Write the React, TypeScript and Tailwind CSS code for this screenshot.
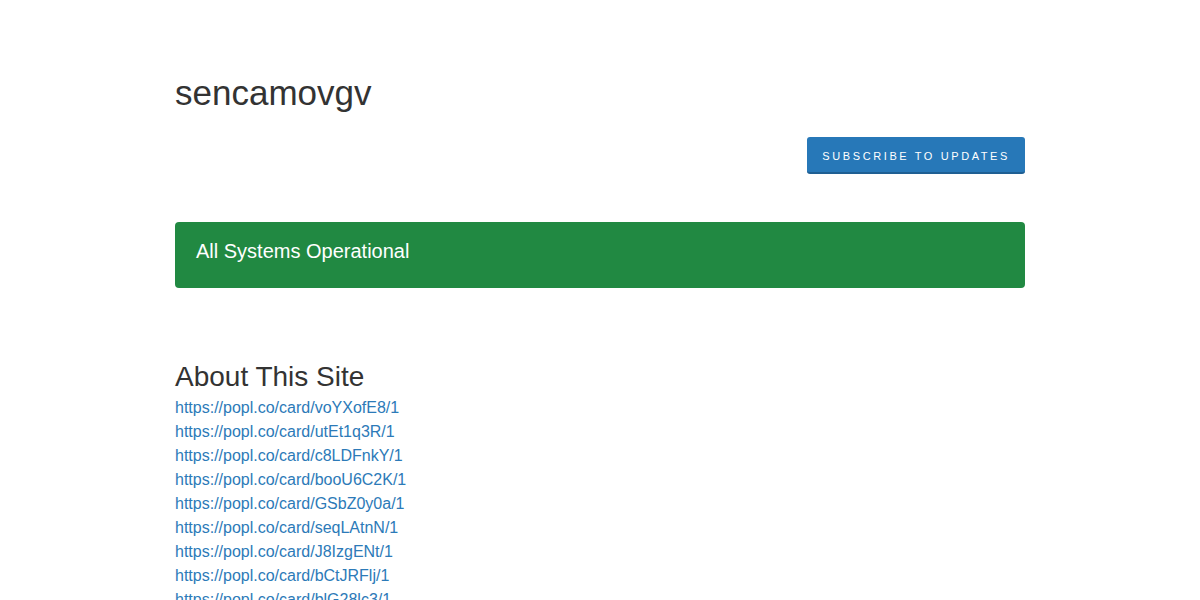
import React from "react";

const links = [
  "voYXofE8",
  "utEt1q3R",
  "c8LDFnkY",
  "booU6C2K",
  "GSbZ0y0a",
  "seqLAtnN",
  "J8IzgENt",
  "bCtJRFlj",
  "blG28lc3",
];

export default function App() {
  return (
    <div
      className="min-h-screen bg-white text-[#333333]"
      style={{ fontFamily: '"Liberation Sans", Arial, sans-serif' }}
    >
      <div className="w-[850px] mx-auto pt-[75px]">
        <h1 className="text-[35px] leading-[35px] font-normal text-[#333333]">sencamovgv</h1>
        <div className="flex justify-end mt-[27px]">
          <button className="h-[37px] px-[15px] pt-[4px] bg-[#2778b8] border-b-2 border-[#1f5f93] rounded-[3px] text-white text-[11px] tracking-[2.6px] uppercase">
            Subscribe To Updates
          </button>
        </div>
        <div className="mt-[48px] h-[66px] bg-[#218942] rounded-[4px] px-[21px] flex items-center">
          <span className="text-white text-[20px] leading-[30px] -mt-[8px]">All Systems Operational</span>
        </div>
        <div className="mt-[73px]">
          <h2 className="text-[28px] leading-[32px] font-normal text-[#333333] mb-[3px]">About This Site</h2>
          <div className="flex flex-col">
            {links.map((id) => (
              <a
                key={id}
                href="#"
                className="text-[16px] leading-[24px] text-[#2c7ab8] w-fit"
              >
                https://popl.co/card/{id}/1
              </a>
            ))}
          </div>
        </div>
      </div>
    </div>
  );
}
